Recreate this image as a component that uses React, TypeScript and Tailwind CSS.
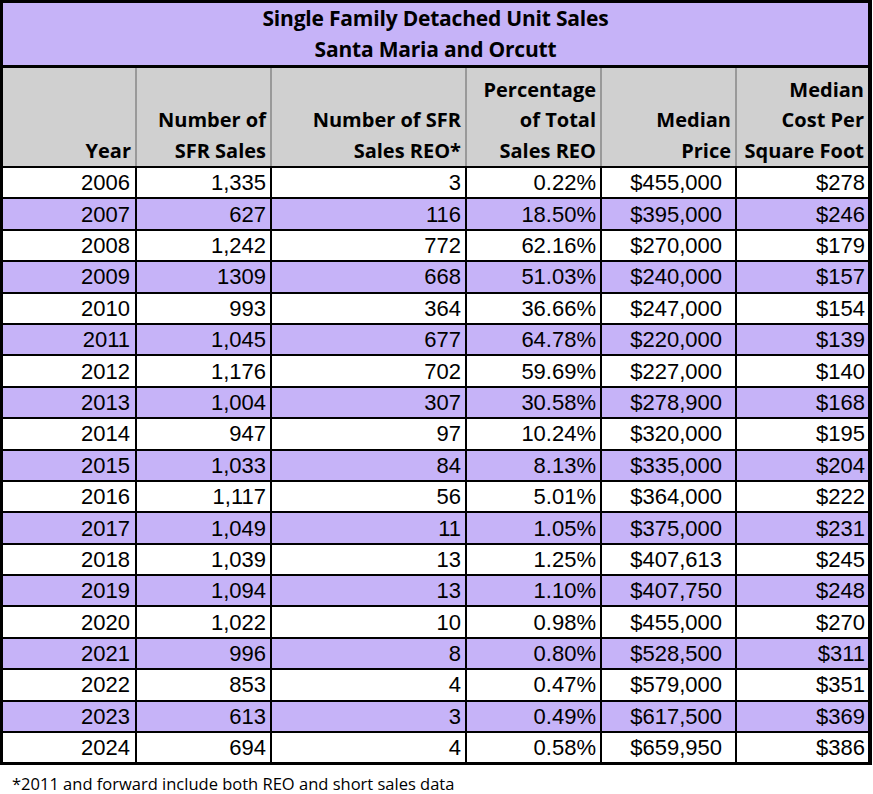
import React from "react"

type Row = [string, string, string, string, string, string]

const rows: Row[] = [
  ["2006", "1,335", "3", "0.22%", "$455,000", "$278"],
  ["2007", "627", "116", "18.50%", "$395,000", "$246"],
  ["2008", "1,242", "772", "62.16%", "$270,000", "$179"],
  ["2009", "1309", "668", "51.03%", "$240,000", "$157"],
  ["2010", "993", "364", "36.66%", "$247,000", "$154"],
  ["2011", "1,045", "677", "64.78%", "$220,000", "$139"],
  ["2012", "1,176", "702", "59.69%", "$227,000", "$140"],
  ["2013", "1,004", "307", "30.58%", "$278,900", "$168"],
  ["2014", "947", "97", "10.24%", "$320,000", "$195"],
  ["2015", "1,033", "84", "8.13%", "$335,000", "$204"],
  ["2016", "1,117", "56", "5.01%", "$364,000", "$222"],
  ["2017", "1,049", "11", "1.05%", "$375,000", "$231"],
  ["2018", "1,039", "13", "1.25%", "$407,613", "$245"],
  ["2019", "1,094", "13", "1.10%", "$407,750", "$248"],
  ["2020", "1,022", "10", "0.98%", "$455,000", "$270"],
  ["2021", "996", "8", "0.80%", "$528,500", "$311"],
  ["2022", "853", "4", "0.47%", "$579,000", "$351"],
  ["2023", "613", "3", "0.49%", "$617,500", "$369"],
  ["2024", "694", "4", "0.58%", "$659,950", "$386"],
]

const widths = ["w-[132px]", "w-[135px]", "w-[195px]", "w-[135px]", "w-[135px]", "w-[133px]"]

const dataPad = ["pr-[5px]", "pr-[4px]", "pr-[4px]", "pr-[4px]", "pr-[13px]", "pr-[3px]"]

const headers: string[][] = [
  ["Year"],
  ["Number of", "SFR Sales"],
  ["Number of SFR", "Sales REO*"],
  ["Percentage", "of Total", "Sales REO"],
  ["Median", "Price"],
  ["Median", "Cost Per", "Square Foot"],
]

export default function App() {
  return (
    <div className="w-[873px] h-[794px] overflow-hidden bg-white font-['Liberation_Sans',Arial,sans-serif]">
      <div className="w-[872px] border-[3px] border-r-4 border-black">
        <div className="h-[62px] bg-[#c6b3f8] flex flex-col items-center justify-center font-['Open_Sans',sans-serif] font-bold text-[21px] leading-[31px] text-black tracking-[-0.2px]">
          <div>Single Family Detached Unit Sales</div>
          <div>Santa Maria and Orcutt</div>
        </div>
        <div className="h-[3px] bg-black" />
        <div className="flex h-[98px] bg-[#d0d0d0]">
          {headers.map((lines, i) => (
            <div
              key={i}
              className={`${widths[i]} ${i > 0 ? "border-l-2 border-[#999]" : ""} flex flex-col justify-end items-end pr-[4px] font-['Open_Sans',sans-serif] font-bold text-[20px] leading-[30.5px] text-black`}
            >
              {lines.map((l) => (
                <div key={l} className="whitespace-nowrap">{l}</div>
              ))}
            </div>
          ))}
        </div>
        {rows.map((row, r) => (
          <div
            key={row[0]}
            className={`flex h-[31.4px] border-t-2 border-black ${r % 2 === 1 ? "bg-[#c6b3f8]" : "bg-white"}`}
          >
            {row.map((v, i) => (
              <div
                key={i}
                className={`${widths[i]} ${i > 0 ? "border-l-2 border-black" : ""} ${dataPad[i]} flex items-center justify-end text-[22px] text-black`}
              >
                {v}
              </div>
            ))}
          </div>
        ))}
      </div>
      <div className="pl-[12px] pt-[9px] font-['Open_Sans',sans-serif] text-[16.5px] leading-[20px] text-black">
        *2011 and forward include both REO and short sales data
      </div>
    </div>
  )
}
